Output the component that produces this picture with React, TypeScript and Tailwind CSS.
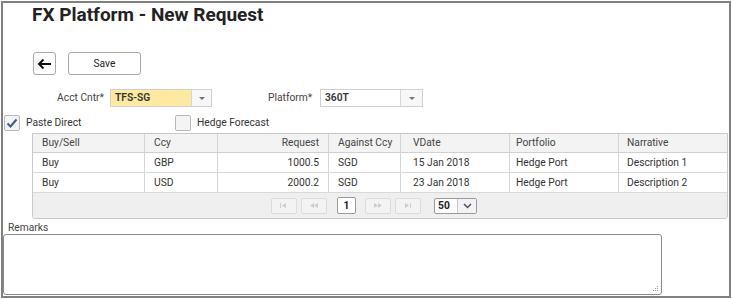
import React from "react";

const font = { fontFamily: "Roboto, 'Liberation Sans', sans-serif" };

function Tri() {
  return (
    <svg width="8" height="5" viewBox="0 0 8 5">
      <path d="M1 1 L7 1 L4 4 Z" fill="#6b7280" />
    </svg>
  );
}

function PagerBtn({ kind }: { kind: "first" | "prev" | "next" | "last" }) {
  const c = "#c9ccd1";
  let g: React.ReactNode = null;
  if (kind === "first")
    g = (
      <g fill={c}>
        <rect x="2" y="2" width="1" height="5" />
        <path d="M8 2 L4 4.5 L8 7 Z" />
      </g>
    );
  if (kind === "prev")
    g = (
      <g fill={c}>
        <path d="M6 2 L2 4.5 L6 7 Z" />
        <path d="M10 2 L6 4.5 L10 7 Z" />
      </g>
    );
  if (kind === "next")
    g = (
      <g fill={c}>
        <path d="M2 2 L6 4.5 L2 7 Z" />
        <path d="M6 2 L10 4.5 L6 7 Z" />
      </g>
    );
  if (kind === "last")
    g = (
      <g fill={c}>
        <path d="M3 2 L7 4.5 L3 7 Z" />
        <rect x="8" y="2" width="1" height="5" />
      </g>
    );
  return (
    <div className="w-[26px] h-[16px] border border-[#dcdcdc] rounded-[2px] bg-[#f3f3f3] flex items-center justify-center">
      <svg width="12" height="9" viewBox="0 0 12 9">
        {g}
      </svg>
    </div>
  );
}

const cols = [
  { w: 112, label: "Buy/Sell", align: "left", pl: 9 },
  { w: 73, label: "Ccy", align: "left", pl: 9 },
  { w: 111, label: "Request", align: "right", pl: 9 },
  { w: 72, label: "Against Ccy", align: "left", pl: 9 },
  { w: 109, label: "VDate", align: "left", pl: 12 },
  { w: 109, label: "Portfolio", align: "left", pl: 6 },
  { w: 110, label: "Narrative", align: "left", pl: 8 },
];

const rows = [
  ["Buy", "GBP", "1000.5", "SGD", "15 Jan 2018", "Hedge Port", "Description 1"],
  ["Buy", "USD", "2000.2", "SGD", "23 Jan 2018", "Hedge Port", "Description 2"],
];

function Cell({ i, text, header, last }: { i: number; text: string; header?: boolean; last?: boolean }) {
  const c = cols[i];
  return (
    <div
      style={{ width: c.w, paddingLeft: c.pl }}
      className={
        "h-full flex items-center pr-[9px] shrink-0 whitespace-nowrap overflow-hidden " +
        (c.align === "right" ? "justify-end " : "") +
        (last ? "" : "border-r border-[#d4d4d4] ")
      }
    >
      <span className={header ? "text-[#444]" : "text-[#333]"}>{text}</span>
    </div>
  );
}

export default function App() {
  return (
    <div className="bg-white w-[732px] h-[299px] pt-px pl-px" style={font}>
      <div className="w-[730px] h-[297px] border-2 border-[#808080] flex flex-col text-[10.25px] text-[#333]">
        <div className="ml-[29px] mt-[2px] text-[19px] leading-[19px] font-bold text-[#222] whitespace-nowrap">
          FX Platform - New Request
        </div>

        <div className="flex mt-[28px] ml-[30px] gap-[12px]">
          <div className="w-[23px] h-[23px] border border-[#a8a8a8] rounded-[3px] bg-white flex items-center justify-center">
            <svg width="15" height="12" viewBox="0 0 15 12">
              <path d="M14 6 H2.5 M6.5 1.5 L2 6 L6.5 10.5" stroke="#111" strokeWidth="2" fill="none" />
            </svg>
          </div>
          <div className="w-[73px] h-[23px] border border-[#a8a8a8] rounded-[3px] bg-white flex items-center justify-center text-[#222]">
            Save
          </div>
        </div>

        <div className="flex items-center mt-[14px] h-[18px]">
          <div className="w-[101px] text-right text-[#444] whitespace-nowrap">Acct Cntr*</div>
          <div className="ml-[6px] w-[102px] h-[18px] border border-[#d0d0d0] flex">
            <div className="flex-1 bg-[#fde9a0] flex items-center pl-[4px] font-semibold text-[#333]">TFS-SG</div>
            <div className="w-[20px] bg-[#f7f7f7] border-l border-[#d6d6d6] flex items-center justify-center">
              <Tri />
            </div>
          </div>
          <div className="ml-[56px] w-[46px] text-[#444] whitespace-nowrap">Platform*</div>
          <div className="ml-[6px] w-[103px] h-[18px] border border-[#d0d0d0] flex">
            <div className="flex-1 bg-white flex items-center pl-[4px] font-semibold text-[#333]">360T</div>
            <div className="w-[22px] bg-[#f7f7f7] border-l border-[#d6d6d6] flex items-center justify-center">
              <Tri />
            </div>
          </div>
        </div>

        <div className="flex items-center mt-[7px] h-[17px]">
          <div className="ml-[1px] w-[16px] h-[16px] border border-[#b8b8b8] rounded-[2px] bg-[#f4f4f4] flex items-center justify-center">
            <svg width="12" height="10" viewBox="0 0 12 10">
              <path d="M1.5 5.5 L4.5 8.5 L10.5 1.5" stroke="#3d5f86" strokeWidth="2" fill="none" />
            </svg>
          </div>
          <div className="ml-[6px] w-[149px] text-[#333] whitespace-nowrap">Paste Direct</div>
          <div className="w-[16px] h-[16px] border border-[#b8b8b8] rounded-[2px] bg-[#f4f4f4]" />
          <div className="ml-[6px] text-[#333] whitespace-nowrap">Hedge Forecast</div>
        </div>

        <div className="ml-[29px] mt-[2px] w-[696px] border border-[#c9c9c9] rounded-b-[3px] flex flex-col">
          <div className="h-[19px] flex bg-[#f3f3f3] border-b border-[#d0d0d0]">
            {cols.map((c, i) => (
              <Cell key={i} i={i} text={c.label} header last={i === cols.length - 1} />
            ))}
          </div>
          {rows.map((r, ri) => (
            <div key={ri} className="h-[20px] flex bg-white border-b border-[#d8d8d8]">
              {r.map((t, i) => (
                <Cell key={i} i={i} text={t} last={i === r.length - 1} />
              ))}
            </div>
          ))}
          <div className="h-[25px] bg-[#efefef] flex items-center rounded-b-[3px]">
            <div className="ml-[238px] flex items-center gap-[4px]">
              <PagerBtn kind="first" />
              <PagerBtn kind="prev" />
            </div>
            <div className="ml-[10px] w-[19px] h-[17px] border border-[#9a9a9a] rounded-[2px] bg-white flex items-center justify-center font-bold text-[#222]">
              1
            </div>
            <div className="ml-[9px] flex items-center gap-[4px]">
              <PagerBtn kind="next" />
              <PagerBtn kind="last" />
            </div>
            <div className="ml-[13px] w-[43px] h-[16px] border border-[#9a9a9a] rounded-[2px] bg-white flex">
              <div className="flex-1 flex items-center pl-[3px] font-bold text-[#222]">50</div>
              <div className="w-[19px] bg-[#f3f3f3] border-l border-[#c8c8c8] flex items-center justify-center">
                <svg width="9" height="6" viewBox="0 0 9 6">
                  <path d="M1 1 L4.5 4.5 L8 1" stroke="#4b5563" strokeWidth="1.5" fill="none" />
                </svg>
              </div>
            </div>
          </div>
        </div>

        <div className="ml-[5px] mt-[3px] leading-[12px] text-[#444]">Remarks</div>
        <div className="w-[659px] h-[61px] border border-[#8a8a8a] rounded-[3px] bg-white relative">
          <svg className="absolute right-[2px] bottom-[2px]" width="7" height="7" viewBox="0 0 7 7">
            <g fill="#9a9a9a">
              <rect x="5" y="1" width="1" height="1" />
              <rect x="3" y="3" width="1" height="1" />
              <rect x="5" y="3" width="1" height="1" />
              <rect x="1" y="5" width="1" height="1" />
              <rect x="3" y="5" width="1" height="1" />
              <rect x="5" y="5" width="1" height="1" />
            </g>
          </svg>
        </div>
      </div>
    </div>
  );
}
